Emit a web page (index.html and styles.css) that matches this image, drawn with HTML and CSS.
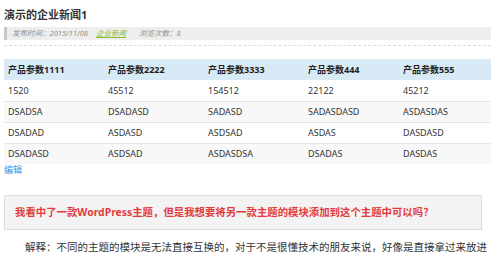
FILE: index.html
```html
<!DOCTYPE html>
<html lang="zh-CN">
<head>
<meta charset="utf-8">
<title>演示的企业新闻1</title>
<link rel="stylesheet" href="styles.css">
</head>
<body>
<div class="article">
  <h1 class="title">演示的企业新闻1</h1>
  <div class="meta">
    <span class="meta-item">发布时间：2015/11/08</span>
    <a class="meta-cat" href="#">企业新闻</a>
    <span class="meta-item">浏览次数：8</span>
  </div>
  <div class="divider"></div>
  <table class="params">
    <colgroup>
      <col class="c1"><col class="c2"><col class="c3"><col class="c4"><col class="c5">
    </colgroup>
    <thead>
      <tr><th>产品参数1111</th><th>产品参数2222</th><th>产品参数3333</th><th>产品参数444</th><th>产品参数555</th></tr>
    </thead>
    <tbody>
      <tr><td>1520</td><td>45512</td><td>154512</td><td>22122</td><td>45212</td></tr>
      <tr><td>DSADSA</td><td>DSADASD</td><td>SADASD</td><td>SADASDASD</td><td>ASDASDAS</td></tr>
      <tr><td>DSADAD</td><td>ASDASD</td><td>ASDSAD</td><td>ASDAS</td><td>DASDASD</td></tr>
      <tr><td>DSADASD</td><td>ASDSAD</td><td>ASDASDSA</td><td>DSADAS</td><td>DASDAS</td></tr>
    </tbody>
  </table>
  <a class="edit" href="#">编辑</a>
  <div class="question">我看中了一款WordPress主题，但是我想要将另一款主题的模块添加到这个主题中可以吗？</div>
  <p class="answer">解释：不同的主题的模块是无法直接互换的，对于不是很懂技术的朋友来说，好像是直接拿过来放进</p>
</div>
</body>
</html>
```

FILE: styles.css
```css
html, body {
  margin: 0;
  padding: 0;
  background: #fff;
  overflow: hidden;
}
body {
  font-family: "Noto Sans", "Noto Sans CJK SC", sans-serif;
  color: #333;
}
.article {
  width: 487px;
  padding: 8px 0 0 4px;
}
.title {
  margin: 0;
  font-size: 11px;
  line-height: 14px;
  font-weight: bold;
  color: #333;
}
.meta {
  margin-top: 5px;
  height: 13px;
  line-height: 13px;
  background: #eeeeee;
  border-left: 3px solid #c8c8c8;
  padding-left: 5px;
  font-size: 7.5px;
  font-style: italic;
  color: #8f8f8f;
  display: flex;
  gap: 8px;
}
.meta-item { color: #8f8f8f; }
.meta-cat {
  color: #8cbc2c;
  text-decoration: underline;
  margin-right: 5px;
}
.divider {
  margin-top: 5px;
  border-bottom: 1px dashed #dcdcdc;
}
.params {
  margin-top: 13px;
  width: 487px;
  border-collapse: collapse;
  table-layout: fixed;
  font-size: 9px;
}
.c1, .c2, .c3 { width: 100px; }
.c4 { width: 95px; }
.c5 { width: 92px; }
.params th, .params td {
  padding: 0 0 0 4px;
  text-align: left;
  white-space: nowrap;
}
.params th {
  height: 21px;
  line-height: 21px;
  background: #d8eaf5;
  font-weight: bold;
  color: #222;
}
.params td {
  height: 20px;
  line-height: 20px;
  border-top: 1px solid #e6e6e6;
  color: #333;
}
.params tbody tr:first-child td { border-top: none; height: 21px; }
.params tbody tr:nth-child(even) td { background: #f8f8f8; }
.edit {
  display: block;
  margin-top: 0;
  font-size: 9px;
  line-height: 12px;
  color: #3b8fe0;
  text-decoration: none;
}
.question {
  margin-top: 19px;
  width: 466px;
  height: 33px;
  line-height: 33px;
  background: #f3f3f3;
  border: 1px solid #dddddd;
  padding-left: 10px;
  font-size: 10.4px;
  font-weight: bold;
  color: #e33b3b;
  white-space: nowrap;
}
.answer {
  margin: 6px 0 0;
  text-indent: 2em;
  font-size: 10.5px;
  line-height: 22px;
  color: #333;
  white-space: nowrap;
}
```
